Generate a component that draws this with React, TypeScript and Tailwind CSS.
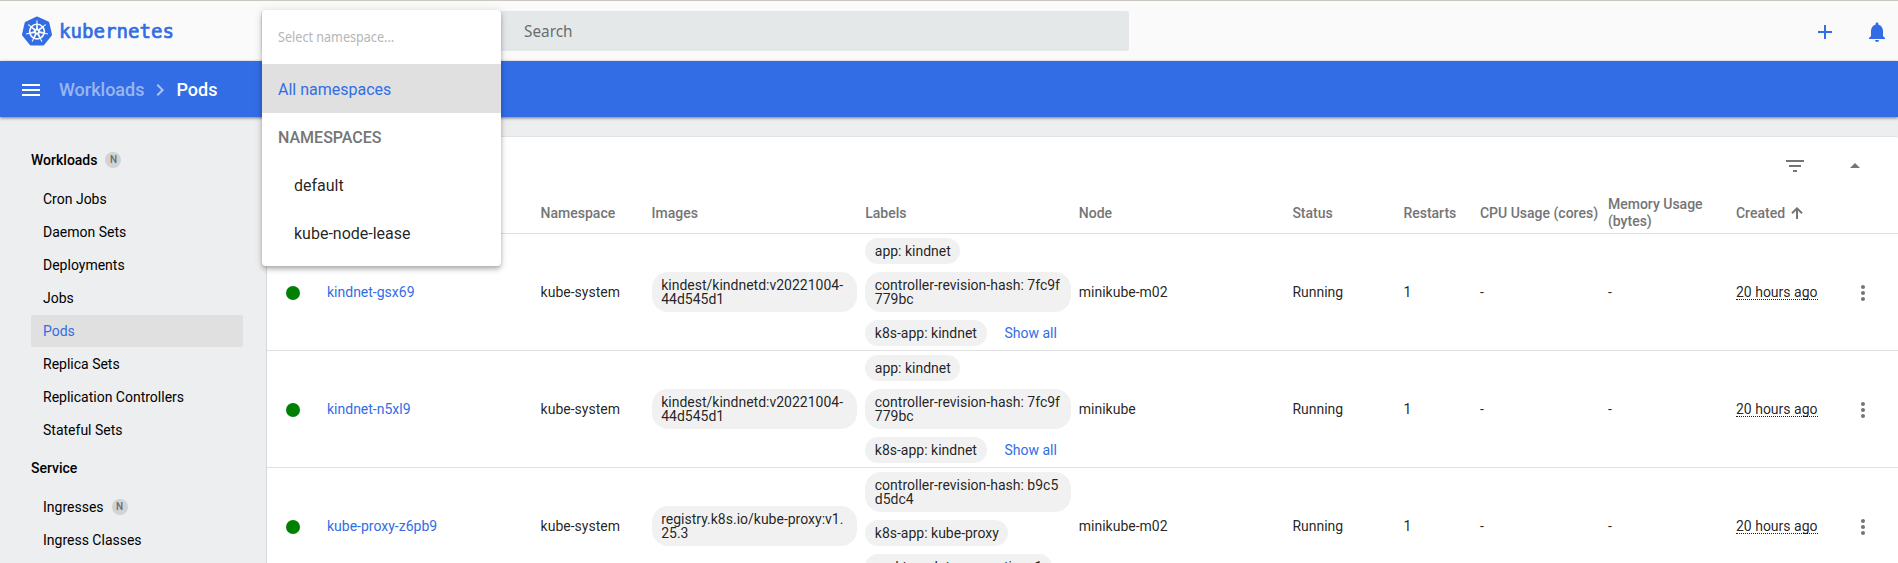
import React from "react";
import { SiKubernetes } from "react-icons/si";
import { MdAdd, MdNotifications, MdMenu, MdChevronRight, MdFilterList, MdArrowDropUp, MdMoreVert } from "react-icons/md";

const cols = "grid grid-cols-[60px_213.6px_111px_213.6px_213.6px_213.6px_111px_76.6px_128px_128px_111px_1fr] items-center";

function Chip({ children, wide }: { children: React.ReactNode; wide?: boolean }) {
  return (
    <div className={wide
      ? "flex h-10 w-[205.6px] shrink-0 items-center rounded-[16px] bg-[#f1f1f1] pl-[9.6px] leading-[14px] whitespace-nowrap"
      : "flex h-[26px] shrink-0 items-center rounded-[13px] bg-[#f1f1f1] px-[9.6px] leading-[14px] whitespace-nowrap"}>
      <div>{children}</div>
    </div>
  );
}

const Lines = ({ a, b }: { a: string; b: string }) => (
  <Chip wide>{a}<br />{b}</Chip>
);

const SortArrow = () => (
  <svg className="ml-[6px] size-3" viewBox="0 0 12 12" fill="none" stroke="currentColor" strokeWidth="2">
    <path d="M6 12V1.5M1 6.3L6 1.4l5 4.9" />
  </svg>
);

type Pod = { name: string; image: [string, string]; node: string; proxy?: boolean };
const pods: Pod[] = [
  { name: "kindnet-gsx69", image: ["kindest/kindnetd:v20221004-", "44d545d1"], node: "minikube-m02" },
  { name: "kindnet-n5xl9", image: ["kindest/kindnetd:v20221004-", "44d545d1"], node: "minikube" },
  { name: "kube-proxy-z6pb9", image: ["registry.k8s.io/kube-proxy:v1.", "25.3"], node: "minikube-m02", proxy: true },
];

function Row({ pod }: { pod: Pod }) {
  return (
    <div className={`${cols} h-[117px] shrink-0 border-b border-[#e0e0e0]`}>
      <div className="pl-[19px] pt-[2px]"><div className="size-[14px] rounded-full bg-[#008000]" /></div>
      <div className="text-[#326de6]">{pod.name}</div>
      <div>kube-system</div>
      <div><Lines a={pod.image[0]} b={pod.image[1]} /></div>
      <div className="flex h-[108px] flex-col items-start gap-2">
        {pod.proxy ? (
          <>
            <Lines a="controller-revision-hash: b9c5" b="d5dc4" />
            <Chip>k8s-app: kube-proxy</Chip>
            <Chip>pod-template-generation: 1</Chip>
          </>
        ) : (
          <>
            <Chip>app: kindnet</Chip>
            <Lines a="controller-revision-hash: 7fc9f" b="779bc" />
            <div className="flex items-center">
              <Chip>k8s-app: kindnet</Chip>
              <span className="ml-[18px] text-[#326de6]">Show all</span>
            </div>
          </>
        )}
      </div>
      <div>{pod.node}</div>
      <div>Running</div>
      <div>1</div>
      <div>-</div>
      <div>-</div>
      <div><span className="inline-block border-b border-dotted border-black/87 leading-[14px]">20 hours ago</span></div>
      <div className="pt-[2px]"><MdMoreVert className="ml-[4px] size-6 text-[#757575]" /></div>
    </div>
  );
}

const Badge = () => (
  <span className="ml-2 flex size-4 items-center justify-center rounded-full bg-[#d2d3d4] text-[10px] font-medium text-[#6b6b6c]">N</span>
);

function NavItem({ label, active, badge }: { label: string; active?: boolean; badge?: boolean }) {
  return (
    <div className={`mb-px ml-[31px] flex h-8 w-[212px] items-center rounded-[2px] pl-3 ${active ? "bg-[#e0e0e0] text-[#326de6]" : ""}`}>
      {label}{badge && <Badge />}
    </div>
  );
}

export default function App() {
  return (
    <div className="relative flex h-[563px] w-[1898px] flex-col overflow-hidden bg-[#eceef0] font-[Roboto,sans-serif] text-sm text-black/87">
      <header className="flex h-[61px] shrink-0 items-center border-t border-[#cbc6c0] bg-[#fafafa]">
        <SiKubernetes className="ml-[22px] size-[30px] text-[#326de6]" />
        <svg className="ml-[8px] h-8 w-[116px]" viewBox="0 0 116 32">
          <text x="-1" y="23" textLength="115" lengthAdjust="spacingAndGlyphs" fill="#326de6" stroke="#326de6" strokeWidth="0.7" fontFamily="DejaVu Sans Mono, monospace" fontSize="19.5">kubernetes</text>
        </svg>
        <div className="ml-[85px] flex h-10 w-[868px] items-center rounded-[2px] bg-[#e4e8e8] pl-[263px] font-['Noto_Sans',sans-serif] text-base text-[#6b6d6d]">
          <span className="origin-left scale-x-[0.96]">Search</span>
        </div>
        <MdAdd className="ml-[684px] mt-[2px] size-6 text-[#326de6]" />
        <MdNotifications className="ml-7 mt-[2px] size-6 text-[#326de6]" />
      </header>
      <div className="z-10 flex h-14 shrink-0 items-center bg-[#326de6] pt-[2px] text-[18px] font-medium text-white shadow-[0_1px_3px_rgba(0,0,0,0.5)]">
        <MdMenu className="ml-[19px] size-6" />
        <span className="ml-4 text-white/50">Workloads</span>
        <MdChevronRight className="mx-1 size-6 text-white/60" />
        <span>Pods</span>
      </div>
      <div className="flex min-h-0 flex-1">
        <nav className="w-[266px] shrink-0 overflow-hidden text-black">
          <div className="ml-[31px] mt-[27px] flex h-8 items-center font-medium">Workloads<Badge /></div>
          <div className="h-[7px]" />
          <NavItem label="Cron Jobs" />
          <NavItem label="Daemon Sets" />
          <NavItem label="Deployments" />
          <NavItem label="Jobs" />
          <NavItem label="Pods" active />
          <NavItem label="Replica Sets" />
          <NavItem label="Replication Controllers" />
          <NavItem label="Stateful Sets" />
          <div className="ml-[31px] mt-[6px] flex h-8 items-center font-medium">Service</div>
          <div className="h-[7px]" />
          <NavItem label="Ingresses" badge />
          <NavItem label="Ingress Classes" />
        </nav>
        <main className="mt-[19px] flex flex-1 flex-col overflow-hidden rounded-t-[2px] border-l border-t border-[#d8d8d8] border-t-[#e2e2e2] bg-white">
          <div className="flex h-[56px] shrink-0 items-center justify-end pt-[2px] text-[#757575]">
            <MdFilterList className="size-6" />
            <MdArrowDropUp className="ml-9 mr-[31px] size-6" />
          </div>
          <div className={`${cols} h-[41px] shrink-0 border-b border-[#e0e0e0] font-medium leading-[17px] text-[#757575]`}>
            <div /><div>Name</div><div>Namespace</div><div>Images</div><div>Labels</div><div>Node</div><div>Status</div><div>Restarts</div>
            <div className="whitespace-nowrap">CPU Usage (cores)</div><div>Memory Usage<br />(bytes)</div>
            <div className="flex items-center">Created<SortArrow /></div><div />
          </div>
          {pods.map((p) => <Row key={p.name} pod={p} />)}
        </main>
      </div>
      <div className="absolute left-[262px] top-[10px] z-20 h-[256px] w-[239px] rounded-[4px] bg-white text-base shadow-[0_2px_4px_-1px_rgba(0,0,0,0.2),0_4px_5px_rgba(0,0,0,0.14),0_1px_10px_rgba(0,0,0,0.12)]">
        <div className="flex h-[54px] items-center pl-4 font-['Noto_Sans',sans-serif] text-sm text-[#b5b5b5]">
          <span className="origin-left scale-x-90">Select namespace...</span>
        </div>
        <div className="flex h-[49px] items-center bg-[#e0e0e0] pl-4 pt-[2px] text-[#326de6]">All namespaces</div>
        <div className="flex h-12 items-center pl-4 pt-[2px] font-medium text-[#757575]">NAMESPACES</div>
        <div className="flex h-12 items-center pl-8 pt-[2px]">default</div>
        <div className="flex h-12 items-center pl-8 pt-[2px]">kube-node-lease</div>
      </div>
    </div>
  );
}
